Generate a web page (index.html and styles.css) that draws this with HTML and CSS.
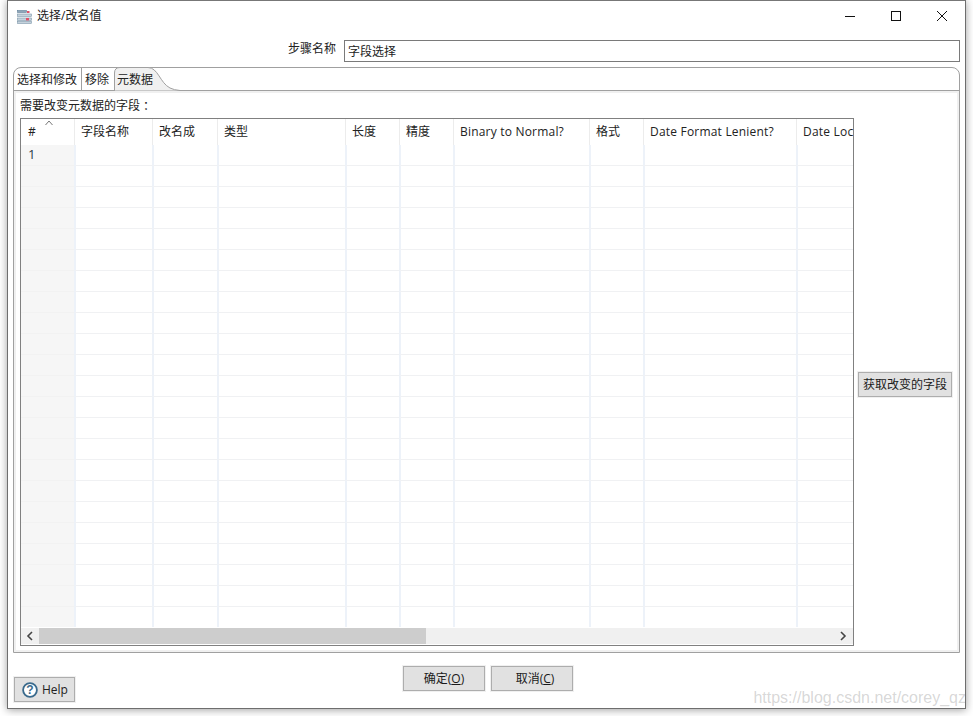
FILE: index.html
```html
<!DOCTYPE html>
<html lang="zh">
<head>
<meta charset="utf-8">
<title>选择/改名值</title>
<link rel="stylesheet" href="styles.css">
</head>
<body>
<div class="window">
  <header class="titlebar">
    <svg class="appicon" width="15" height="14" viewBox="0 0 15 14">
      <rect x="0.5" y="0.5" width="9" height="2" fill="#8fa6b8" stroke="#5f7f98" stroke-width="0.6"/>
      <rect x="0.5" y="4" width="14" height="2.4" fill="#c5d2dc" stroke="#7d97aa" stroke-width="0.6"/>
      <rect x="0.5" y="8" width="14" height="2.4" fill="#c5d2dc" stroke="#7d97aa" stroke-width="0.6"/>
      <rect x="0.5" y="11.5" width="14" height="2" fill="#c5d2dc" stroke="#7d97aa" stroke-width="0.6"/>
      <rect x="10" y="1" width="2.5" height="2" fill="#e0526a"/>
      <rect x="9" y="8" width="3" height="2.4" fill="#e0526a"/>
    </svg>
    <span class="title">选择/改名值</span>
    <div class="controls">
      <svg class="ctl" width="12" height="12" viewBox="0 0 12 12"><path d="M1 6.5H11" stroke="#111" fill="none"/></svg>
      <svg class="ctl" width="12" height="12" viewBox="0 0 12 12"><rect x="1.5" y="1.5" width="9" height="9" stroke="#111" fill="none"/></svg>
      <svg class="ctl" width="12" height="12" viewBox="0 0 12 12"><path d="M1 1L11 11M11 1L1 11" stroke="#111" fill="none"/></svg>
    </div>
  </header>

  <div class="stepline">
    <label class="steplabel">步骤名称</label>
    <div class="stepinput">字段选择</div>
  </div>

  <section class="folder">
    <nav class="tabs">
      <span class="tab tab-first">选择和修改</span>
      <span class="tab tab-mid">移除</span>
      <span class="tab tab-active">
        <svg class="tabshape" width="66" height="24" viewBox="0 0 66 24"><path d="M0.5 24V6Q0.5 0.5 6 0.5H34C44 0.5 46 16 56 21Q60 23 66 23.5V24Z" fill="#f0f0f0" stroke="#a0a0a0"/></svg>
        <span class="tabtext">元数据</span>
      </span>
    </nav>
    <div class="pane">
      <div class="panelabel">需要改变元数据的字段<span class="colon">：</span></div>
      <div class="panebody">
        <div class="gridbox">
          <div class="gridclip">
            <table class="grid">
              <colgroup>
                <col class="c53"><col class="c78"><col class="c65"><col class="c128"><col class="c54"><col class="c54"><col class="c136"><col class="c54"><col class="c153"><col class="c100">
              </colgroup>
              <thead>
                <tr><th class="hash">#<svg class="sort" width="8" height="6" viewBox="0 0 8 6"><path d="M0.5 5L4 1L7.5 5" stroke="#777" fill="none"/></svg></th><th>字段名称</th><th>改名成</th><th>类型</th><th>长度</th><th>精度</th><th class="latin">Binary to Normal?</th><th>格式</th><th class="latin">Date Format Lenient?</th><th class="latin">Date Locale</th></tr>
              </thead>
              <tbody>
                <tr class="first"><td>1</td><td></td><td></td><td></td><td></td><td></td><td></td><td></td><td></td><td></td></tr>
                <tr><td></td><td></td><td></td><td></td><td></td><td></td><td></td><td></td><td></td><td></td></tr>
                <tr><td></td><td></td><td></td><td></td><td></td><td></td><td></td><td></td><td></td><td></td></tr>
                <tr><td></td><td></td><td></td><td></td><td></td><td></td><td></td><td></td><td></td><td></td></tr>
                <tr><td></td><td></td><td></td><td></td><td></td><td></td><td></td><td></td><td></td><td></td></tr>
                <tr><td></td><td></td><td></td><td></td><td></td><td></td><td></td><td></td><td></td><td></td></tr>
                <tr><td></td><td></td><td></td><td></td><td></td><td></td><td></td><td></td><td></td><td></td></tr>
                <tr><td></td><td></td><td></td><td></td><td></td><td></td><td></td><td></td><td></td><td></td></tr>
                <tr><td></td><td></td><td></td><td></td><td></td><td></td><td></td><td></td><td></td><td></td></tr>
                <tr><td></td><td></td><td></td><td></td><td></td><td></td><td></td><td></td><td></td><td></td></tr>
                <tr><td></td><td></td><td></td><td></td><td></td><td></td><td></td><td></td><td></td><td></td></tr>
                <tr><td></td><td></td><td></td><td></td><td></td><td></td><td></td><td></td><td></td><td></td></tr>
                <tr><td></td><td></td><td></td><td></td><td></td><td></td><td></td><td></td><td></td><td></td></tr>
                <tr><td></td><td></td><td></td><td></td><td></td><td></td><td></td><td></td><td></td><td></td></tr>
                <tr><td></td><td></td><td></td><td></td><td></td><td></td><td></td><td></td><td></td><td></td></tr>
                <tr><td></td><td></td><td></td><td></td><td></td><td></td><td></td><td></td><td></td><td></td></tr>
                <tr><td></td><td></td><td></td><td></td><td></td><td></td><td></td><td></td><td></td><td></td></tr>
                <tr><td></td><td></td><td></td><td></td><td></td><td></td><td></td><td></td><td></td><td></td></tr>
                <tr><td></td><td></td><td></td><td></td><td></td><td></td><td></td><td></td><td></td><td></td></tr>
                <tr><td></td><td></td><td></td><td></td><td></td><td></td><td></td><td></td><td></td><td></td></tr>
                <tr><td></td><td></td><td></td><td></td><td></td><td></td><td></td><td></td><td></td><td></td></tr>
                <tr><td></td><td></td><td></td><td></td><td></td><td></td><td></td><td></td><td></td><td></td></tr>
                <tr><td></td><td></td><td></td><td></td><td></td><td></td><td></td><td></td><td></td><td></td></tr>
              </tbody>
            </table>
          </div>
          <div class="hscroll">
            <span class="arrow"><svg width="8" height="10" viewBox="0 0 8 10"><path d="M6 1L2 5L6 9" stroke="#444" stroke-width="1.6" fill="none"/></svg></span>
            <span class="thumb"></span>
            <span class="arrow arrow-right"><svg width="8" height="10" viewBox="0 0 8 10"><path d="M2 1L6 5L2 9" stroke="#444" stroke-width="1.6" fill="none"/></svg></span>
          </div>
        </div>
        <div class="sidebar"><button class="btn btn-get">获取改变的字段</button></div>
      </div>
    </div>
  </section>

  <footer class="footer">
    <button class="btn btn-help">
      <svg width="16" height="16" viewBox="0 0 16 16"><circle cx="8" cy="8" r="6.9" fill="#fff" stroke="#3a6a8c" stroke-width="1.8"/><text x="8" y="12" text-anchor="middle" class="helpq">?</text></svg>
      <span>Help</span>
    </button>
    <div class="actions">
      <button class="btn btn-action">确定(<u>O</u>)</button>
      <button class="btn btn-action btn-cancel">取消(<u>C</u>)</button>
    </div>
  </footer>
</div>
<div class="watermark">https://blog.csdn.net/corey_qz</div>
</body>
</html>
```
FILE: styles.css
```css
* { box-sizing: border-box; }
html, body { margin: 0; padding: 0; background: #fff; }
body {
  width: 973px;
  height: 716px;
  overflow: hidden;
  position: relative;
  font-family: "Noto Sans CJK SC", "Open Sans", sans-serif;
  font-size: 12px;
  color: #1a1a1a;
}
.window {
  margin-left: 7px;
  width: 959px;
  height: 709px;
  background: #fff;
  border: 1px solid #6e6e6e;
  border-top-color: #777;
  box-shadow: 0 1px 8px rgba(0, 0, 0, .38);
  padding: 0 5px;
  display: flex;
  flex-direction: column;
  font-family: "Open Sans", "Noto Sans CJK SC", sans-serif;
}
.titlebar {
  height: 39px;
  flex: none;
  display: flex;
  align-items: flex-start;
  padding-top: 8px;
  padding-left: 4px;
}
.appicon { margin-right: 5px; margin-top: 1px; flex: none; }
.title { line-height: 14px; color: #222; }
.controls {
  margin-left: auto;
  margin-right: 12px;
  display: flex;
  gap: 34px;
  margin-top: 1px;
}
.stepline {
  flex: none;
  height: 22px;
  margin-bottom: 5px;
  display: flex;
  align-items: flex-start;
}
.steplabel { width: 323px; text-align: right; line-height: 17px; flex: none; color: #222; }
.stepinput {
  margin-left: 8px;
  flex: 1;
  height: 22px;
  border: 1px solid #7a7a7a;
  padding-left: 3px;
  line-height: 21px;
  color: #222;
}
.folder {
  flex: none;
  height: 586px;
  border: 1px solid #a0a0a0;
  border-top-right-radius: 8px;
  border-top-left-radius: 8px;
  display: flex;
  flex-direction: column;
}
.tabs {
  flex: none;
  height: 23px;
  display: flex;
  border-bottom: 1px solid #a0a0a0;
  align-items: stretch;
}
.tab { line-height: 23px; position: relative; color: #222; }
.tab-first { width: 68px; padding-left: 3px; border-right: 1px solid #a0a0a0; }
.tab-mid { width: 32px; padding-left: 3px; }
.tab-active { width: 66px; height: 23px; padding-left: 3px; }
.tabshape { position: absolute; left: 0; top: -1px; }
.tabtext { position: relative; }
.pane {
  flex: 1;
  min-height: 0;
  border: 2px solid #f0f0f0;
  border-top-width: 2px;
  padding: 3px 6px 4px 4px;
  display: flex;
  flex-direction: column;
}
.panelabel { flex: none; height: 22px; line-height: 18px; color: #222; }
.colon { font-family: "Noto Sans CJK TC", sans-serif; margin-left: 3px; }
.panebody { flex: 1; min-height: 0; display: flex; }
.gridbox {
  width: 834px;
  flex: none;
  border: 1px solid #808080;
  padding: 0 0 1px;
  display: flex;
  flex-direction: column;
}
.gridclip { flex: 1; min-height: 0; overflow: hidden; }
.grid {
  table-layout: fixed;
  border-collapse: separate;
  border-spacing: 0;
  width: 875px;
}
.c53 { width: 53px; }
.c54 { width: 54px; }
.c78 { width: 78px; }
.c65 { width: 65px; }
.c128 { width: 128px; }
.c136 { width: 136px; }
.c153 { width: 153px; }
.c100 { width: 100px; }
.grid th {
  height: 25px;
  font-weight: 400;
  text-align: left;
  padding: 0 0 0 6px;
  white-space: nowrap;
  overflow: hidden;
  vertical-align: top;
  line-height: 26px;
  color: #222;
  background: #fff;
}
.grid th + th { border-left: 1px solid #ececec; padding-left: 6px; }
.grid th.latin { letter-spacing: .2px; }
.grid th.hash { padding-left: 7px; position: relative; }
.sort { position: absolute; left: 24px; top: 1px; }
.grid td {
  height: 21px;
  padding: 0;
  border-bottom: 1px solid #f0f1f3;
  background: #fff;
}
.grid td + td { border-left: 2px solid #edf2f9; }
.grid td:first-child {
  background: #f6f6f6;
  padding: 0 0 2px 7px;
  color: #2a3a4a;
  font-size: 13px;
  line-height: 17px;
  border-bottom-color: #f2f2f2;
}
.hscroll {
  flex: none;
  height: 16px;
  margin-top: 1px;
  background: #f0f0f0;
  display: flex;
  align-items: stretch;
}
.arrow { width: 18px; flex: none; display: flex; align-items: center; justify-content: center; }
.arrow-right { margin-left: auto; margin-right: 1px; }
.thumb { width: 387px; background: #cdcdcd; }
.sidebar { flex: 1; display: flex; align-items: center; justify-content: center; padding-top: 5px; }
.btn {
  font: inherit;
  color: #1a1a1a;
  background: #e1e1e1;
  border: 1px solid #adadad;
  outline: 1px solid #f0f0f0;
  height: 25px;
  padding: 0;
  line-height: 21px;
}
.btn-get { width: 94px; margin-left: 4px; }
.footer { flex: 1; position: relative; display: flex; align-items: flex-start; }
.btn-help {
  margin-top: 24px;
  width: 61px;
  margin-left: 1px;
  display: flex;
  align-items: center;
  gap: 4px;
  padding-left: 7px;
  color: #222;
}
.helpq { font-size: 12px; font-weight: 700; fill: #3a6a8c; font-family: "Liberation Sans", sans-serif; }
.actions { margin-top: 13px; margin-left: 328px; display: flex; gap: 6px; }
.btn-action { width: 82px; }
.btn-cancel { padding-left: 6px; }
.watermark {
  position: absolute;
  right: 7px;
  top: 688px;
  font-family: "Liberation Sans", sans-serif;
  font-size: 16px;
  line-height: 20px;
  color: rgba(120, 120, 120, .3);
  white-space: nowrap;
}
```
